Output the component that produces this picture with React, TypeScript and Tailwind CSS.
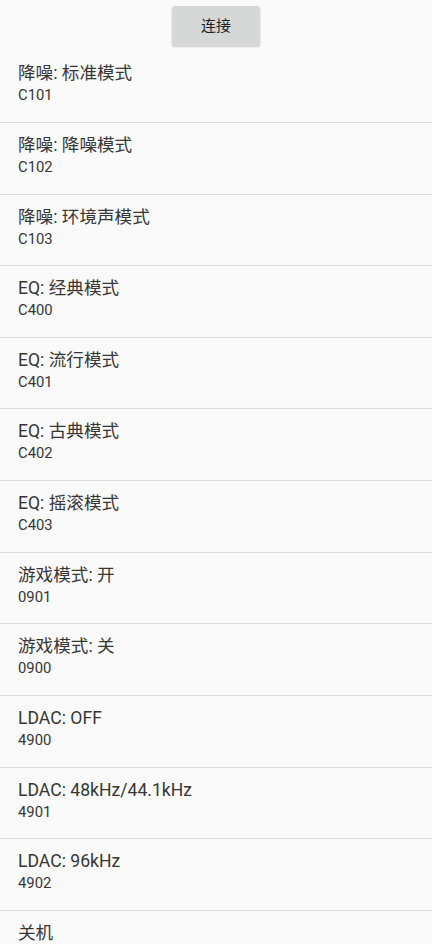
import React from "react";

const items: [string, string][] = [
  ["降噪: 标准模式", "C101"],
  ["降噪: 降噪模式", "C102"],
  ["降噪: 环境声模式", "C103"],
  ["EQ: 经典模式", "C400"],
  ["EQ: 流行模式", "C401"],
  ["EQ: 古典模式", "C402"],
  ["EQ: 摇滚模式", "C403"],
  ["游戏模式: 开", "0901"],
  ["游戏模式: 关", "0900"],
  ["LDAC: OFF", "4900"],
  ["LDAC: 48kHz/44.1kHz", "4901"],
  ["LDAC: 96kHz", "4902"],
  ["关机", ""],
];

export default function App() {
  return (
    <div
      className="w-[432px] h-[944px] overflow-hidden bg-[#fafafa] text-[#363636]"
      style={{ fontFamily: "Roboto, 'Noto Sans CJK SC', sans-serif" }}
    >
      <div className="h-[51.36px] flex justify-center pt-[6px]">
        <button className="w-[88px] h-[40px] rounded-[3px] bg-[#d6d7d7] shadow-[0_1px_2px_rgba(0,0,0,0.2)] text-[15px] text-[#1e1e1e]">
          连接
        </button>
      </div>
      {items.map(([title, code]) => (
        <div
          key={title}
          className="h-[71.64px] shrink-0 border-b border-[#dcdcdc] px-[18px] pt-[10px]"
        >
          <div className="text-[17.6px] leading-6">{title}</div>
          {code && <div className="text-[14.8px] leading-5">{code}</div>}
        </div>
      ))}
    </div>
  );
}
